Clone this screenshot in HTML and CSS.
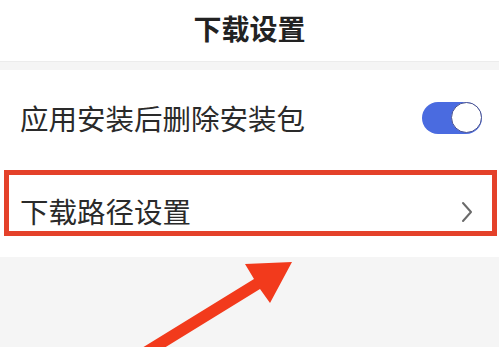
FILE: index.html
```html
<!DOCTYPE html>
<html lang="zh-CN">
<head>
    <meta charset="UTF-8">
    <meta name="viewport" content="width=device-width, initial-scale=1.0">
    <title>下载设置</title>
    <link rel="stylesheet" href="styles.css">
</head>
<body>
    <header class="topbar">
        <h1>下载设置</h1>
    </header>
    <div class="gap"></div>
    <section class="list">
        <div class="row">
            <span class="label">应用安装后删除安装包</span>
            <span class="switch on"><span class="knob"></span></span>
        </div>
        <div class="row path">
            <span class="label">下载路径设置</span>
            <svg class="chevron" width="12" height="22" viewBox="0 0 12 22">
                <path d="M2 2 L10 11 L2 20" fill="none" stroke="#6a6a6a" stroke-width="2" stroke-linecap="round" stroke-linejoin="round"/>
            </svg>
            <div class="mark"></div>
        </div>
    </section>
    <svg class="arrow" width="499" height="347" viewBox="0 0 499 347">
        <polygon points="137,351 254,279 245,264 292,262 270,303 260,289 143,361" fill="#f23a1c"/>
    </svg>
</body>
</html>
```

FILE: styles.css
```css
body {
    margin: 0;
    width: 499px;
    height: 347px;
    overflow: hidden;
    background: #f5f5f5;
    font-family: "Noto Sans CJK SC", "Noto Sans", sans-serif;
    color: #222;
    position: relative;
}
.topbar {
    height: 61px;
    background: #fff;
    display: flex;
    align-items: center;
    justify-content: center;
    border-bottom: 1px solid #ececec;
}
.topbar h1 {
    margin: 0;
    font-size: 28px;
    font-weight: bold;
    color: #222;
    padding-bottom: 6px;
}
.gap {
    height: 8px;
    background: #f5f5f5;
}
.list {
    background: #fff;
}
.row {
    height: 96px;
    display: flex;
    align-items: center;
    justify-content: space-between;
    padding: 0 17px 0 20px;
}
.row .label {
    font-size: 28.5px;
    color: #2a2a2a;
    line-height: 1;
}
.row.path {
    height: 91px;
    position: relative;
    padding-right: 26px;
}
.switch {
    width: 60px;
    height: 32px;
    border-radius: 16px;
    background: #4a6be0;
    position: relative;
}
.switch .knob {
    position: absolute;
    right: 0;
    top: 0;
    width: 29px;
    height: 29px;
    border-radius: 50%;
    background: #fff;
    border: 1.5px solid #4d5590;
}
.mark {
    position: absolute;
    left: 4px;
    right: 2px;
    top: 4px;
    height: 56px;
    border: 5px solid #e4412a;
}
.arrow {
    position: absolute;
    left: 0;
    top: 0;
}
```
